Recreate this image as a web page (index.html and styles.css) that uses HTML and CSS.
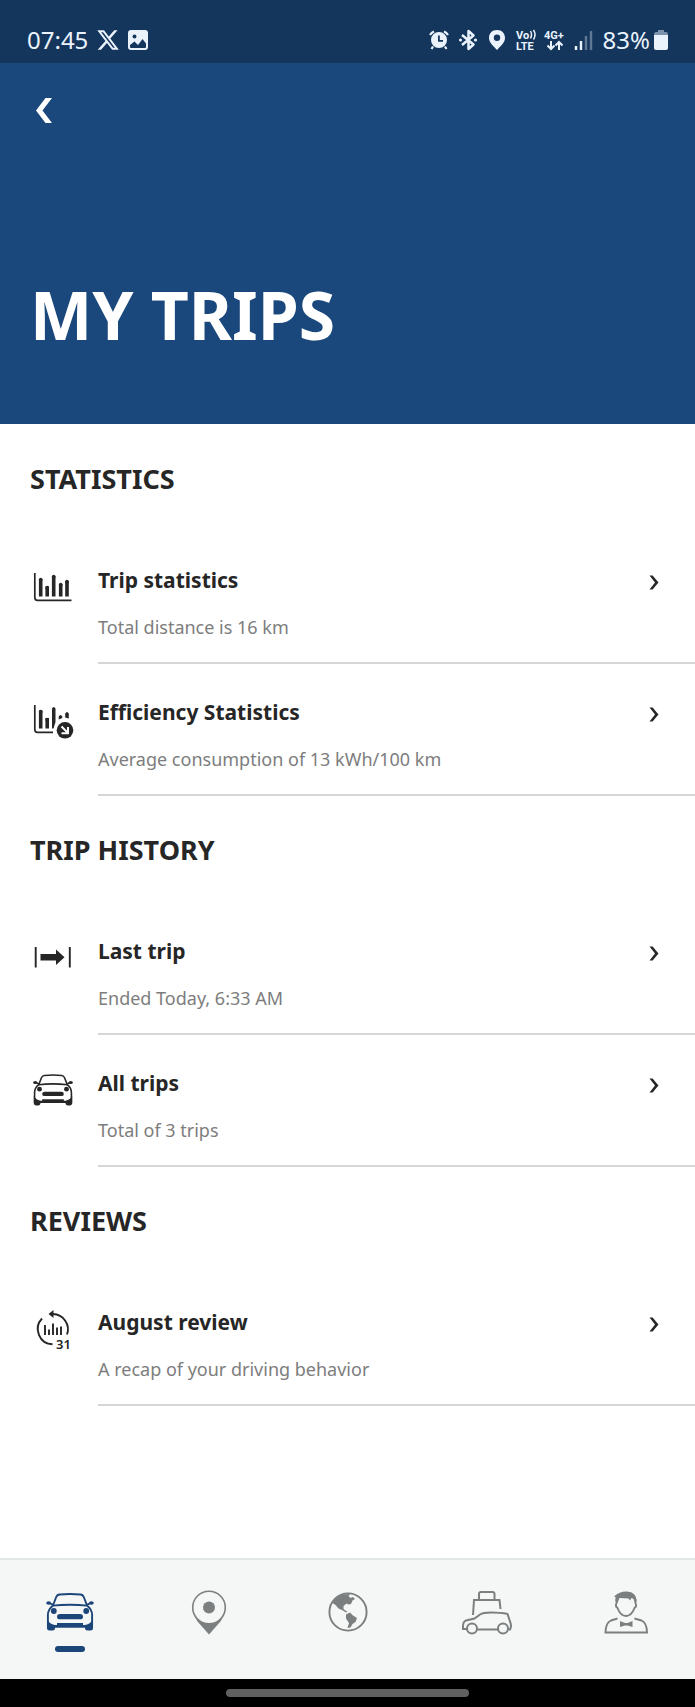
FILE: index.html
```html
<!DOCTYPE html>
<html lang="en">
<head>
    <meta charset="UTF-8">
    <meta name="viewport" content="width=device-width, initial-scale=1">
    <title>My Trips</title>
    <link rel="stylesheet" href="styles.css">
</head>
<body>
    <svg class="symbols" aria-hidden="true">
        <symbol id="car" viewBox="0 0 48 38">
            <g fill="none" stroke="currentColor" stroke-width="1.9">
                <path d="M7 12.5L10 4.5Q11 1.8 13.5 1.5Q24 .6 34.5 1.5Q37 1.8 38 4.5L41 12.5"/>
                <path d="M6.5 12.6Q24 10.8 41.5 12.6"/>
                <path d="M7 12.5Q1.9 16.5 1.9 22V35M41 12.5Q46.1 16.5 46.1 22V35"/>
                <path d="M3 9.8L7.5 12M45 9.8L40.5 12"/>
                <path d="M8 33.5H40"/>
            </g>
            <g fill="currentColor">
                <ellipse cx="2.6" cy="10" rx="2.4" ry="1.8"/>
                <ellipse cx="45.4" cy="10" rx="2.4" ry="1.8"/>
                <circle cx="7.8" cy="18" r="2.9"/>
                <circle cx="40.2" cy="18" r="2.9"/>
                <path d="M14 21H34Q37 21 37 23.7Q37 26.3 34 26.3H14Q11 26.3 11 23.7Q11 21 14 21Z"/>
                <path d="M1 26Q3 31 9 32H11V30H37V32H39Q45 31 47 26V35Q47 37.5 44.5 37.5H41.5Q39 37.5 39 35V34.5H9V35Q9 37.5 6.5 37.5H3.5Q1 37.5 1 35Z"/>
            </g>
        </symbol>
        <symbol id="chevron" viewBox="0 0 10 15">
            <path fill="currentColor" d="M.5 .5H3.6L9.5 7.5L3.6 14.5H.5L6 7.5Z"/>
        </symbol>
    </svg>

    <div class="status">
        <div class="status-side">
            <span class="status-text">07:45</span>
            <svg class="status-x" viewBox="1 2 22 20"><path fill="currentColor" d="M18.244 2.25h3.308l-7.227 8.26 8.502 11.24H16.17l-5.214-6.817L4.99 21.75H1.68l7.73-8.835L1.254 2.25H8.08l4.713 6.231zm-1.161 17.52h1.833L7.084 4.126H5.117z"/></svg>
            <svg class="status-icon" viewBox="0 0 20 20"><path fill="currentColor" fill-rule="evenodd" d="M3 0H17Q20 0 20 3V17Q20 20 17 20H3Q0 20 0 17V3Q0 0 3 0ZM6.5 4.5A2 2 0 1 0 6.5 8.5A2 2 0 1 0 6.5 4.5ZM2 15V17Q2 18 3 18H17Q18 18 18 17V13.5L14.5 9L10 15L6.5 11.5Z"/></svg>
        </div>
        <div class="status-side">
            <svg class="status-icon" viewBox="0 0 20 20">
                <path fill="currentColor" fill-rule="evenodd" d="M10 2A8 8 0 1 0 10 18A8 8 0 1 0 10 2ZM9 5.5H10.8V10H14V11.8H9Z"/>
                <path fill="none" stroke="currentColor" stroke-width="2.2" d="M1 5Q2.5 2.5 5 1.5M19 5Q17.5 2.5 15 1.5M4 16.5L2.5 19M16 16.5L17.5 19"/>
            </svg>
            <svg class="status-icon" viewBox="0 0 20 20">
                <path fill="none" stroke="currentColor" stroke-width="2.5" stroke-linejoin="round" d="M4 5L15.5 14.5L10.5 19V1L15.5 5.5L4 15"/>
                <circle cx="2.5" cy="10" r="1.6" fill="currentColor"/>
                <circle cx="17.5" cy="10" r="1.6" fill="currentColor"/>
            </svg>
            <svg class="status-icon" viewBox="0 0 20 20"><path fill="currentColor" fill-rule="evenodd" d="M10 0C5 0 2 3.5 2 8C2 13 7 16.500 10 20C13 16.500 18 13 18 8C18 3.500 15 0 10 0ZM10 4.500A3.200 3.200 0 1 1 10 10.900A3.200 3.200 0 1 1 10 4.500Z"/></svg>
            <svg class="status-icon" viewBox="0 0 20 20">
                <text class="tiny" x="0" y="9">Vo</text>
                <path fill="none" stroke="currentColor" stroke-width="1.5" d="M14.500 1Q16.500 4.500 14.500 8.500M17.500 0Q20.500 4.500 17.500 9.500"/>
                <text class="tiny" x="0" y="20">LTE</text>
            </svg>
            <svg class="status-icon" viewBox="0 0 20 20">
                <text class="tiny" x="-1" y="9">4G+</text>
                <path fill="none" stroke="currentColor" stroke-width="2" d="M6 11V19M2.5 15.5L6 19L9.5 15.5M14 20V12M10.5 15.5L14 12L17.5 15.5"/>
            </svg>
            <svg class="status-icon" viewBox="0 0 20 20">
                <path stroke="currentColor" stroke-width="2.4" d="M2 16V20M7 11V20"/>
                <path stroke="#5f7894" stroke-width="2.4" d="M12 6V20M17 1V20"/>
            </svg>
            <span class="battery">
                <span class="status-text">83%</span>
                <svg class="battery-icon" viewBox="0 0 14 20">
                    <path fill="#7d92aa" d="M4 0H10V2H12Q14 2 14 5H0Q0 2 2 2H4Z"/>
                    <path fill="currentColor" d="M0 5H14V18Q14 20 12 20H2Q0 20 0 18Z"/>
                </svg>
            </span>
        </div>
    </div>

    <header class="header">
        <button class="back" type="button" aria-label="Back">
            <svg viewBox="0 0 16 25"><path fill="currentColor" d="M9.5 0H16L6.5 12.5L16 25H9.5L0 12.5Z"/></svg>
        </button>
        <h1>MY TRIPS</h1>
    </header>

    <main class="content">
        <section>
            <h2>STATISTICS</h2>
            <a class="row" href="#trip-statistics">
                <svg class="row-icon" viewBox="0 0 40 40">
                    <path fill="none" stroke="currentColor" stroke-width="1.7" d="M1.8 5V29.5Q1.8 32.3 4.5 32.3H38.5"/>
                    <path fill="none" stroke="currentColor" stroke-width="3.6" d="M7.7 28.500V11M14.200 28.500V18.500M20.700 28.500V8M27.700 28.500V16M34 28.500V13"/>
                    <path fill="none" stroke="currentColor" stroke-width="3.6" stroke-linecap="round" d="M7.700 12V11.500M14.200 20V19.500M20.700 9V8.500M27.700 17V16.500M34 14V13.500"/>
                </svg>
                <div class="row-body">
                    <div>
                        <h3>Trip statistics</h3>
                        <p>Total distance is 16 km</p>
                    </div>
                    <svg class="chevron"><use href="#chevron"/></svg>
                </div>
            </a>
            <a class="row" href="#efficiency">
                <svg class="row-icon" viewBox="0 0 40 40">
                    <path fill="none" stroke="currentColor" stroke-width="1.7" d="M1.8 5V29.5Q1.8 32.3 4.5 32.3H20"/>
                    <path stroke="currentColor" stroke-width="3.6" d="M7.7 28.5V10.500M14.2 28.5V18"/>
                    <path stroke="currentColor" stroke-width="3.600" stroke-linecap="round" d="M7.700 12V11.500M14.200 20V19.500"/>
                    <path fill="currentColor" d="M19 8.500Q20.700 5.500 22.500 8.500V22L20.500 28.500H19ZM25.700 19.500V16.500Q27.500 13.500 29.300 16.500V18ZM32.200 17.500V13.500Q34 10.500 35.800 13.500V18.500Z"/>
                    <circle cx="32" cy="30.300" r="8.300" fill="currentColor"/>
                    <path fill="none" stroke="#fff" stroke-width="2" d="M28.5 26.5L34.5 32.5M35 27V33.2H28.5"/>
                </svg>
                <div class="row-body">
                    <div>
                        <h3>Efficiency Statistics</h3>
                        <p>Average consumption of 13 kWh/100 km</p>
                    </div>
                    <svg class="chevron"><use href="#chevron"/></svg>
                </div>
            </a>
        </section>

        <section>
            <h2>TRIP HISTORY</h2>
            <a class="row" href="#last-trip">
                <svg class="row-icon" viewBox="0 0 40 40">
                    <path stroke="currentColor" stroke-width="1.9" d="M2.7 8V28.5M36.8 8V28.5"/>
                    <path fill="currentColor" d="M7.5 15H23V10.5L31.5 18.2L23 26V21.5H7.5Z"/>
                </svg>
                <div class="row-body">
                    <div>
                        <h3>Last trip</h3>
                        <p>Ended Today, 6:33 AM</p>
                    </div>
                    <svg class="chevron"><use href="#chevron"/></svg>
                </div>
            </a>
            <a class="row" href="#all-trips">
                <svg class="row-icon" viewBox="0 0 40 40"><use href="#car" x="0" y="3" width="40" height="32"/></svg>
                <div class="row-body">
                    <div>
                        <h3>All trips</h3>
                        <p>Total of 3 trips</p>
                    </div>
                    <svg class="chevron"><use href="#chevron"/></svg>
                </div>
            </a>
        </section>

        <section>
            <h2>REVIEWS</h2>
            <a class="row" href="#review">
                <svg class="row-icon" viewBox="0 0 40 40">
                    <path fill="none" stroke="currentColor" stroke-width="1.9" d="M9 8.5A15.3 15.3 0 0 0 19.5 34.3M20 4A15.3 15.3 0 0 1 34 24.5"/>
                    <path fill="currentColor" d="M15.5 4L20.5 0V8Z"/>
                    <path stroke="currentColor" stroke-width="1.9" d="M12 25V15M16 25V19.5M20 25V13.5M24 25V17.5M28 25V16.5"/>
                    <text class="day" x="23" y="39">31</text>
                </svg>
                <div class="row-body">
                    <div>
                        <h3>August review</h3>
                        <p>A recap of your driving behavior</p>
                    </div>
                    <svg class="chevron"><use href="#chevron"/></svg>
                </div>
            </a>
        </section>
    </main>

    <nav class="tabs">
        <a class="tab active" href="#car-tab" aria-label="Vehicle">
            <svg viewBox="0 0 52 52"><use href="#car" x="2" y="7" width="48" height="38"/></svg>
        </a>
        <a class="tab" href="#map" aria-label="Map">
            <svg viewBox="0 0 52 52">
                <circle cx="26" cy="21.5" r="16.300" fill="none" stroke="currentColor" stroke-width="1.600"/>
                <circle cx="26" cy="21.500" r="6" fill="currentColor"/>
                <path fill="currentColor" d="M11.5 30Q17 37.5 26 37.5T40.5 30L37.5 35.5L26 48.5L14.5 35.5Z"/>
            </svg>
        </a>
        <a class="tab" href="#discover" aria-label="Discover">
            <svg viewBox="0 0 52 52">
                <circle cx="26" cy="26" r="18.600" fill="none" stroke="currentColor" stroke-width="1.900"/>
                <path fill="currentColor" d="M10.500 17Q14 10.500 20 8.500L28 8L26.500 10L28.500 12L31 11L33 13L30.500 14.500L29 18L26.500 18.500L24.500 17.500L21.500 20L21.500 23L25.500 26L24 26.500L20 24L16.500 22.500L13.500 19Z"/>
                <path fill="currentColor" d="M24 28.500L28 26.500L31 29.500L35 32L33.500 36L30.500 38L28.500 41.500L25.500 42L27 37L24 32.500Z"/>
            </svg>
        </a>
        <a class="tab" href="#travel" aria-label="Travel">
            <svg viewBox="0 0 52 52">
                <g fill="none" stroke="currentColor" stroke-width="2">
                    <path d="M12 29L13 14H38.5L39.500 23"/>
                    <path d="M18 14V8Q18 6 20 6H31.500Q33.500 6 33.500 8V14"/>
                    <path d="M6 43H2Q1.500 35.500 5 34.500L13.500 32.500L19 28.500Q22 26.500 30 26.500Q40 26.500 46.500 28L49 35.500Q51 40 49 43.500H47.500"/>
                    <path d="M16.500 43.500H37"/>
                    <circle cx="11" cy="42.500" r="5"/>
                    <circle cx="42" cy="42.500" r="5"/>
                </g>
            </svg>
        </a>
        <a class="tab" href="#profile" aria-label="Profile">
            <svg viewBox="0 0 52 52">
                <g fill="none" stroke="currentColor" stroke-width="1.9">
                    <path d="M16.5 13V17Q15 20.5 17.5 22Q20.5 30 26 30T34.5 22Q37 20.5 35.5 17V13"/>
                    <path d="M17.500 32.500L11 34.500Q5.500 37 5.500 46.500H47Q47 37 41.500 34.500L34.500 32.500"/>
                </g>
                <path fill="currentColor" d="M14 10.5Q20 5 27 5.5Q36.5 6 36.5 15L35 17L33.5 13L31.5 12L30 14.5L28.5 12.5L19.5 12L17.5 17L15.5 15V11Z"/>
                <path fill="currentColor" d="M20 35L25 37H27.5L32.5 35V41L27.5 39.5H25L20 41Z"/>
            </svg>
        </a>
    </nav>

    <div class="gesture"><span class="gesture-bar"></span></div>
</body>
</html>
```

FILE: styles.css
```css
* {
    box-sizing: border-box;
}
body {
    margin: 0;
    min-height: 100vh;
    display: flex;
    flex-direction: column;
    background: #fff;
    color: #262626;
    font-family: "Noto Sans", "Open Sans", sans-serif;
}
svg {
    display: block;
    flex: none;
    overflow: visible;
}
h1, h2, h3, p {
    margin: 0;
}
a {
    color: inherit;
    text-decoration: none;
}
.symbols {
    display: none;
}

/* status bar */
.status {
    height: 63px;
    padding: 16px 27px 0;
    display: flex;
    justify-content: space-between;
    align-items: center;
    background: #14365c;
    color: #eaf3fc;
}
.status-side {
    display: flex;
    align-items: center;
    gap: 9px;
}
.status-text {
    font-size: 24px;
    line-height: 24px;
}
.status-x {
    width: 22px;
    height: 20px;
}
.status-icon {
    width: 20px;
    height: 20px;
}
.tiny {
    font: bold 11px Roboto, sans-serif;
    fill: currentColor;
}
.battery {
    display: flex;
    align-items: center;
    gap: 4px;
}
.battery-icon {
    width: 14px;
    height: 20px;
}

/* header */
.header {
    padding: 27px 30px 70px;
    background: #1a487c;
    color: #fff;
}
.back {
    display: flex;
    align-items: center;
    width: 40px;
    height: 40px;
    margin-bottom: 144px;
    padding: 0 6px;
    border: 0;
    background: none;
    color: inherit;
}
.back svg {
    width: 16px;
    height: 25px;
}
h1 {
    font-size: 66px;
    line-height: 80px;
}

/* list */
.content {
    flex: 1;
    padding-top: 1px;
}
h2 {
    padding: 36px 30px;
    font-size: 27px;
    line-height: 35px;
}
.row {
    display: flex;
    padding-left: 33px;
}
.row-icon {
    width: 40px;
    height: 40px;
    margin: 36px 25px 0 0;
}
.row-body {
    flex: 1;
    display: flex;
    justify-content: space-between;
    padding: 34px 36px 23px 0;
    border-bottom: 2px solid #d6d6d6;
}
h3 {
    margin-bottom: 21px;
    font-size: 21px;
    line-height: 28px;
}
.row p {
    color: #7d7d7d;
    font-size: 18px;
    line-height: 24px;
}
.chevron {
    width: 10px;
    height: 15px;
    margin-top: 9px;
}
.day {
    font-size: 13px;
    font-weight: 600;
    fill: currentColor;
}

/* bottom navigation */
.tabs {
    display: flex;
    height: 121px;
    padding-top: 26px;
    border-top: 2px solid #e2e6e6;
    background: #f5f7f7;
    color: #7c7f7f;
}
.tab {
    flex: 1;
    display: flex;
    flex-direction: column;
    align-items: center;
    gap: 8px;
}
.tab svg {
    width: 52px;
    height: 52px;
}
.active {
    color: #1c4579;
}
.active::after {
    content: "";
    width: 30px;
    height: 6px;
    border-radius: 3px;
    background: currentColor;
}
.gesture {
    display: flex;
    justify-content: center;
    height: 28px;
    padding-top: 10px;
    background: #000;
}
.gesture-bar {
    width: 35%;
    height: 8px;
    border-radius: 4px;
    background: #606060;
}
```
